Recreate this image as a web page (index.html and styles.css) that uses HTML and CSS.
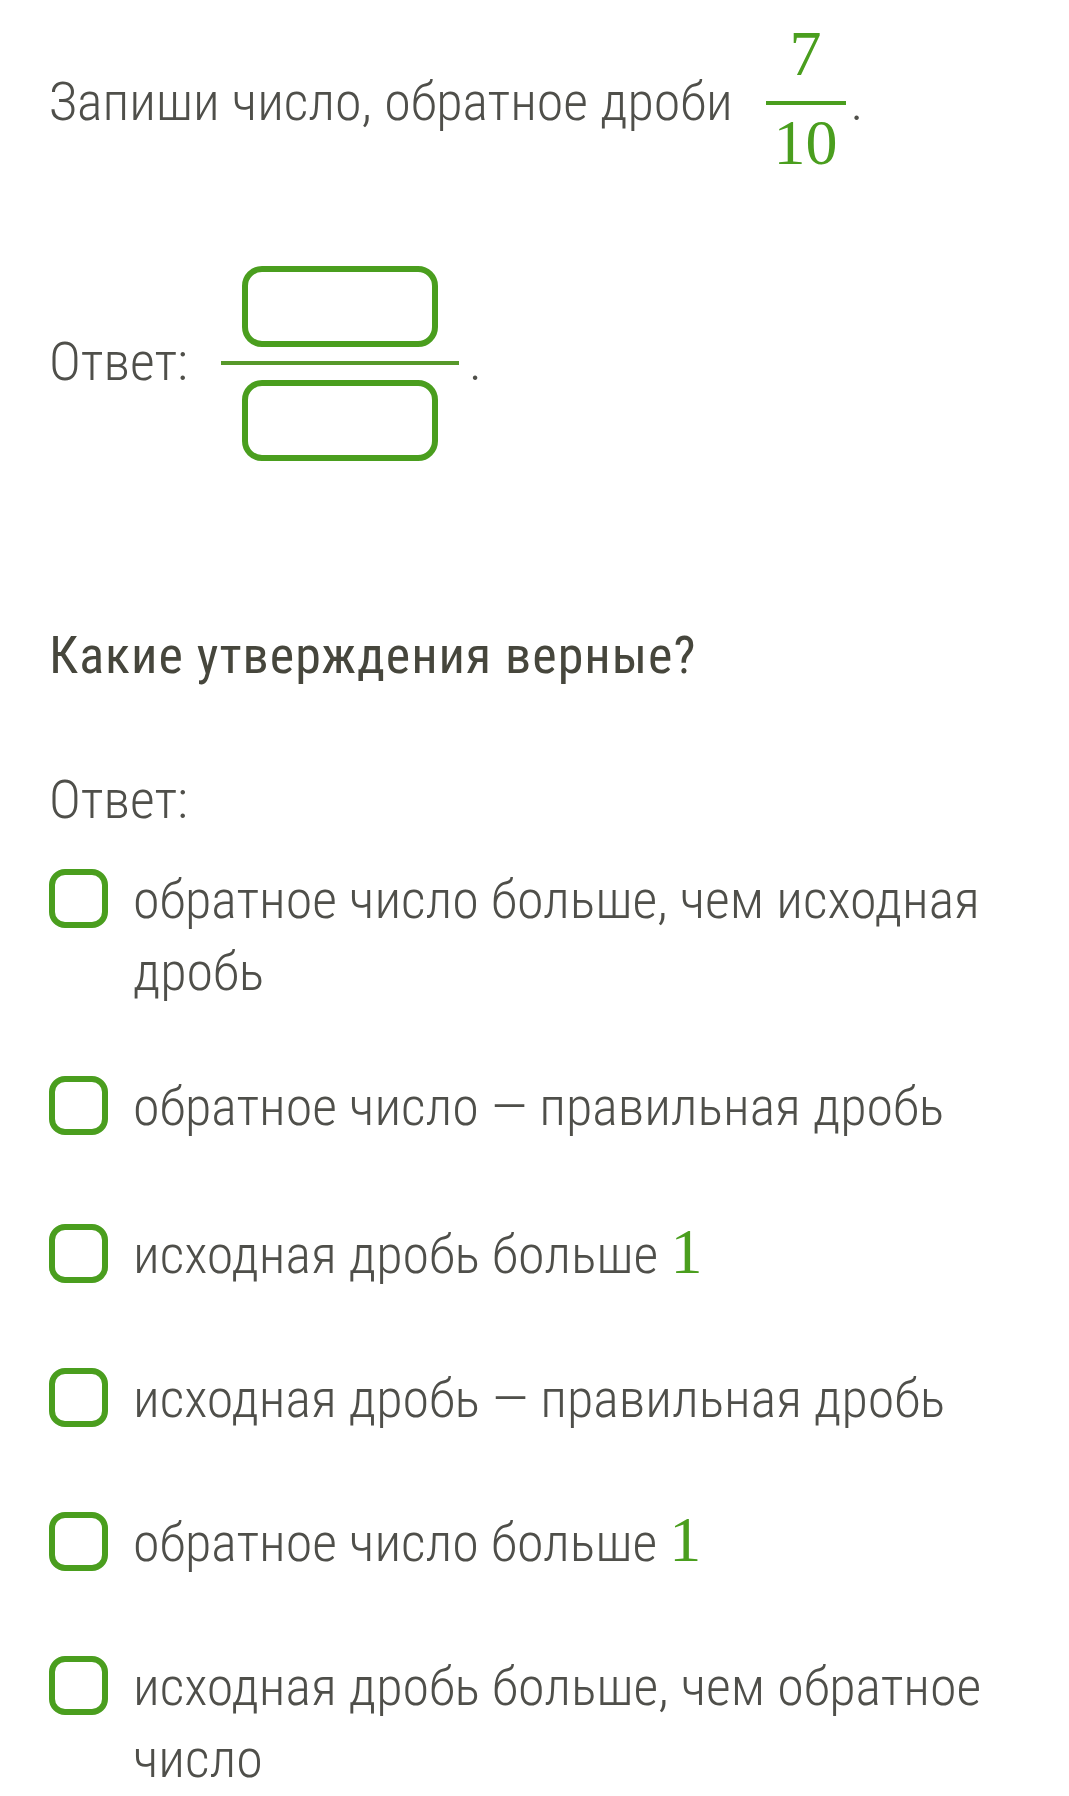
FILE: index.html
```html
<!DOCTYPE html>
<html lang="ru">
<head>
<meta charset="utf-8">
<title>Обратные числа</title>
<link rel="stylesheet" href="styles.css">
</head>
<body>
<main class="page">
  <section class="task">
    <div class="row q-row">
      <span class="txt q-text">Запиши число, обратное дроби</span>
      <span class="frac">
        <span class="num">7</span>
        <span class="den">10</span>
      </span>
      <span class="txt dot">.</span>
    </div>
    <div class="row answer-row">
      <span class="txt answer-label">Ответ:</span>
      <span class="input-frac">
        <span class="input-box"></span>
        <span class="input-line"></span>
        <span class="input-box"></span>
      </span>
      <span class="txt dot2">.</span>
    </div>
  </section>
  <section class="task2">
    <h2 class="heading">Какие утверждения верные?</h2>
    <p class="txt label2">Ответ:</p>
    <ul class="options">
      <li class="option option-first"><span class="check"></span><span class="txt opt-text">обратное число больше, чем исходная дробь</span></li>
      <li class="option option-second"><span class="check"></span><span class="txt opt-text">обратное число — правильная дробь</span></li>
      <li class="option"><span class="check"></span><span class="txt opt-text">исходная дробь больше <span class="one">1</span></span></li>
      <li class="option"><span class="check"></span><span class="txt opt-text">исходная дробь — правильная дробь</span></li>
      <li class="option"><span class="check"></span><span class="txt opt-text">обратное число больше <span class="one">1</span></span></li>
      <li class="option"><span class="check"></span><span class="txt opt-text">исходная дробь больше, чем обратное число</span></li>
    </ul>
  </section>
</main>
</body>
</html>
```
FILE: styles.css
```css
html, body {
  margin: 0;
  padding: 0;
  background: #ffffff;
}

body {
  font-family: "Roboto Condensed", Roboto, sans-serif;
}

.page {
  padding: 22px 49px 0 49px;
}

.txt {
  font-family: "Roboto Condensed", Roboto, sans-serif;
  font-weight: 300;
  font-size: 54px;
  line-height: 72px;
  color: #4f4f4a;
}

.row {
  display: flex;
  align-items: flex-start;
}

.q-text {
  margin-top: 44px;
}

.frac {
  display: flex;
  flex-direction: column;
  align-items: stretch;
  text-align: center;
  margin-left: 33px;
  padding: 0 8px;
  font-family: "Liberation Serif", "Times New Roman", serif;
  font-size: 64px;
  line-height: 64px;
  color: #4a9e1e;
}

.num {
  display: block;
  padding-bottom: 15px;
  border-bottom: 4px solid #4a9e1e;
  margin: 0 -8px;
}

.den {
  display: block;
  padding-top: 6px;
}

.dot {
  margin-top: 44px;
  margin-left: 5px;
}

.answer-row {
  margin-top: 91px;
}

.answer-label {
  margin-top: 60px;
}

.input-frac {
  display: flex;
  flex-direction: column;
  align-items: center;
  width: 238px;
  margin-left: 33px;
}

.input-box {
  display: block;
  width: 196px;
  height: 81px;
  box-sizing: border-box;
  border: 6px solid #4a9e1e;
  border-radius: 20px;
}

.input-line {
  display: block;
  width: 100%;
  height: 4px;
  margin: 14px 0 15px;
  background: #57992a;
}

.dot2 {
  margin-top: 60px;
  margin-left: 10px;
}

.heading {
  margin: 159px 0 0;
  font-family: "Roboto Condensed", Roboto, sans-serif;
  font-weight: 400;
  font-size: 52px;
  line-height: 72px;
  letter-spacing: 1px;
  color: #46463c;
}

.label2 {
  margin: 72px 0 0;
}

.options {
  list-style: none;
  margin: 28px 0 0;
  padding: 0;
}

.option {
  display: flex;
  align-items: flex-start;
  gap: 25px;
  margin-bottom: 72px;
}

.option-first {
  margin-bottom: 63px;
}

.option-second {
  margin-bottom: 76px;
}

.check {
  flex: none;
  width: 59px;
  height: 59px;
  box-sizing: border-box;
  border: 6px solid #4a9e1e;
  border-radius: 16px;
  margin-top: 5px;
}

.opt-text {
  flex: 1;
}

.one {
  font-family: "Liberation Serif", "Times New Roman", serif;
  font-weight: 400;
  font-size: 64px;
  line-height: 64px;
  color: #4a9e1e;
}
```
